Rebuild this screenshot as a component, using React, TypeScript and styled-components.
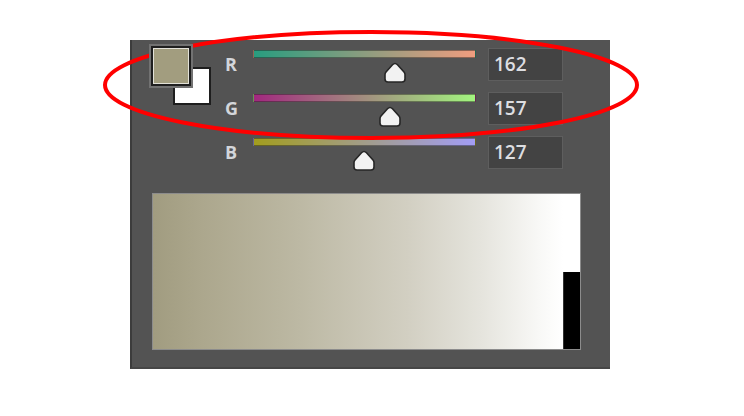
import React from 'react';
import styled, { createGlobalStyle } from 'styled-components';

const GlobalStyle = createGlobalStyle`
  html, body {
    margin: 0;
    padding: 0;
    background: #ffffff;
  }
  body {
    font-family: "Open Sans", "Liberation Sans", sans-serif;
  }
`;

const Stage = styled.div`
  position: relative;
  width: 744px;
  height: 416px;
  padding: 40px 0 0 130px;
  box-sizing: border-box;
  overflow: hidden;
`;

const Panel = styled.div`
  width: 480px;
  height: 329px;
  box-sizing: border-box;
  background: #535353;
  border-left: 2px solid #3c3c3c;
  border-bottom: 2px solid #464646;
  padding-top: 4px;
  display: flex;
  flex-direction: column;
`;

const TopSection = styled.div`
  display: flex;
  padding-left: 17px;
`;

const Swatches = styled.div`
  position: relative;
  width: 76px;
  height: 132px;
  flex-shrink: 0;
`;

const Foreground = styled.div<{ $color: string }>`
  position: absolute;
  left: 0;
  top: 0;
  z-index: 2;
  width: 44px;
  height: 44px;
  box-sizing: border-box;
  border: 2px solid #727272;
  background: ${(p) => p.$color};
  box-shadow: inset 0 0 0 2px #1f1f1f, inset 0 0 0 3px #e2e1d8;
`;

const Background = styled.div`
  position: absolute;
  left: 24px;
  top: 23px;
  z-index: 1;
  width: 38px;
  height: 38px;
  box-sizing: border-box;
  background: #ffffff;
  border: 2px solid #1e1e1e;
`;

const Rows = styled.div`
  padding-top: 4px;
  display: flex;
  flex-direction: column;
`;

const Row = styled.div`
  display: grid;
  grid-template-columns: 28px 235px 75px;
  height: 44px;
`;

const Label = styled.div`
  height: 33px;
  line-height: 33px;
  font-size: 18px;
  font-weight: 700;
  color: #d3d6da;
`;

const SliderCell = styled.div`
  position: relative;
  width: 223px;
  height: 44px;
`;

const Track = styled.div<{ $from: string; $to: string }>`
  margin-top: 2px;
  height: 8px;
  box-sizing: border-box;
  border: 1px solid rgba(30, 30, 30, 0.45);
  background: linear-gradient(to right, ${(p) => p.$from}, ${(p) => p.$to});
`;

const Thumb = styled.svg`
  position: absolute;
  top: 14px;
  width: 22px;
  height: 21px;
  transform: translateX(-50%);
`;

const ValueBox = styled.div`
  height: 33px;
  box-sizing: border-box;
  background: #434343;
  border: 1px solid #5e5e5e;
  padding-left: 5px;
  line-height: 31px;
  font-size: 19px;
  font-weight: 600;
  color: #dddee1;
`;

const RampFrame = styled.div`
  margin: 13px 29px 0 20px;
  height: 157px;
  display: flex;
  border: 1px solid #8c8c8c;
  box-sizing: border-box;
`;

const Ramp = styled.div`
  flex: 1;
  background: linear-gradient(
    to right,
    #a19c80 0%,
    #aca78d 12%,
    #bcb8a3 35%,
    #d2cfc2 62%,
    #e5e4dd 80%,
    #f8f8f6 94%,
    #ffffff 100%
  );
`;

const Strip = styled.div`
  width: 17px;
  display: flex;
  flex-direction: column;
`;

const StripPart = styled.div<{ $color: string }>`
  flex: 1;
  background: ${(p) => p.$color};
  box-sizing: border-box;
  border-left: ${(p) => (p.$color === '#000000' ? '1px solid #333' : 'none')};
`;

const Annotation = styled.svg`
  position: absolute;
  left: 0;
  top: 0;
  width: 744px;
  height: 416px;
  pointer-events: none;
`;

const rgb = { r: 162, g: 157, b: 127 };

const channels = [
  { key: 'R', value: rgb.r, from: `rgb(40,157,127)`, to: `rgb(240,157,127)` },
  { key: 'G', value: rgb.g, from: `rgb(162,40,127)`, to: `rgb(162,245,127)` },
  { key: 'B', value: rgb.b, from: `rgb(162,157,30)`, to: `rgb(162,157,245)` },
];

const ThumbIcon: React.FC<{ pct: number }> = ({ pct }) => (
  <Thumb viewBox="0 0 22 21" style={{ left: `${pct}%` }}>
    <path
      d="M11 1.5 C12 1.5 12.8 2 13.5 2.8 L20 10 C20.6 10.7 21 11.5 21 12.5 V17 C21 18.7 19.7 20 18 20 H4 C2.3 20 1 18.7 1 17 V12.5 C1 11.5 1.4 10.7 2 10 L8.5 2.8 C9.2 2 10 1.5 11 1.5 Z"
      fill="#f2f2f2"
      stroke="#262626"
      strokeWidth="1.6"
    />
  </Thumb>
);

export default function App() {
  return (
    <>
      <GlobalStyle />
      <Stage>
        <Panel>
          <TopSection>
            <Swatches>
              <Background />
              <Foreground $color={`rgb(${rgb.r},${rgb.g},${rgb.b})`} />
            </Swatches>
            <Rows>
              {channels.map((c) => (
                <Row key={c.key}>
                  <Label>{c.key}</Label>
                  <SliderCell>
                    <Track $from={c.from} $to={c.to} />
                    <ThumbIcon pct={(c.value / 255) * 100} />
                  </SliderCell>
                  <ValueBox>{c.value}</ValueBox>
                </Row>
              ))}
            </Rows>
          </TopSection>
          <RampFrame>
            <Ramp />
            <Strip>
              <StripPart $color="#ffffff" />
              <StripPart $color="#000000" />
            </Strip>
          </RampFrame>
        </Panel>
        <Annotation viewBox="0 0 744 416">
          <ellipse cx="371" cy="85" rx="266" ry="53" fill="none" stroke="#ff0000" strokeWidth="4" />
        </Annotation>
      </Stage>
    </>
  );
}
